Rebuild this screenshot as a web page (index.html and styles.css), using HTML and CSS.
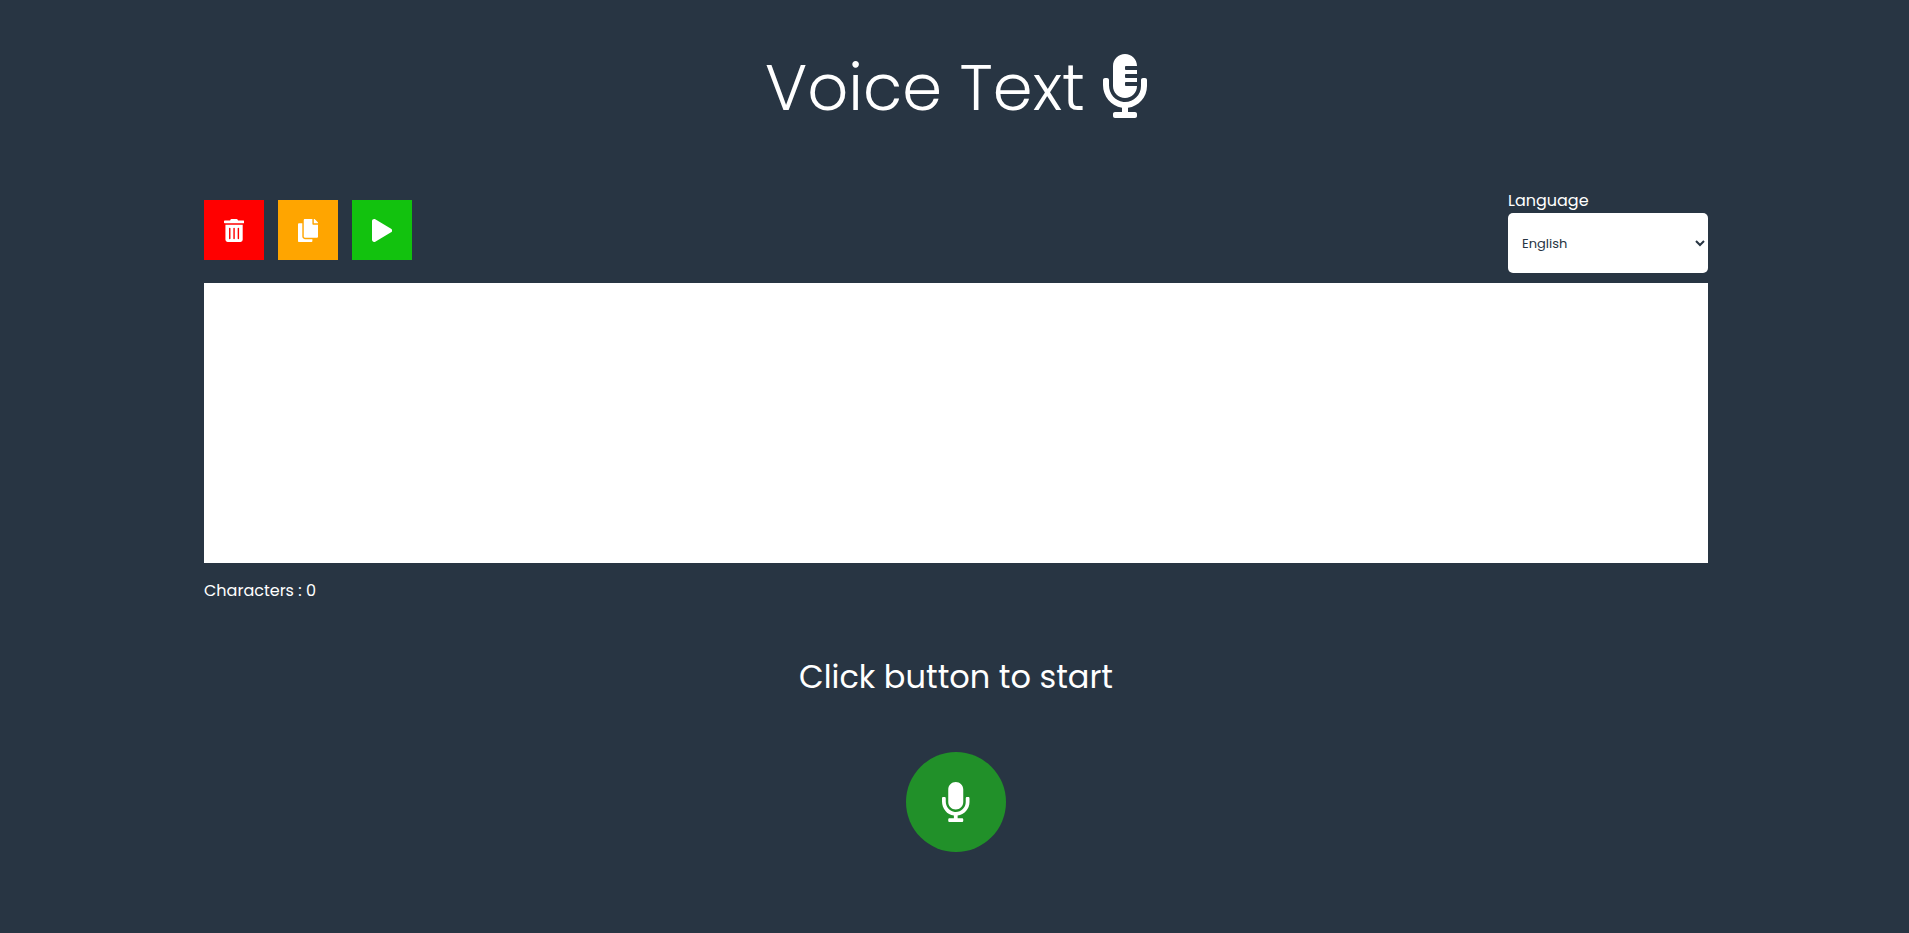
FILE: index.html
```html
<!DOCTYPE html>
<html lang="en">
<head>
<meta charset="utf-8">
<meta name="viewport" content="width=device-width, initial-scale=1">
<title>Voice Text</title>
<link rel="stylesheet" href="styles.css">
</head>
<body>
<main class="page">
  <h1 class="title">
    <span>Voice Text</span>
    <svg class="title-icon" viewBox="0 0 352 512" aria-hidden="true"><path d="M336 192h-16c-8.840 0-16 7.160-16 16v48c0 74.800-64.490 134.820-140.790 127.380C96.710 376.890 48 317.110 48 250.300V208c0-8.840-7.160-16-16-16H16c-8.840 0-16 7.160-16 16v40.160c0 89.640 63.970 169.550 152 181.690V464H96c-8.840 0-16 7.160-16 16v16c0 8.840 7.160 16 16 16h160c8.840 0 16-7.160 16-16v-16c0-8.840-7.160-16-16-16h-56v-33.770C285.710 418.470 352 344.900 352 256v-48c0-8.840-7.160-16-16-16zM176 352c53.020 0 96-42.980 96-96h-85.330c-5.890 0-10.670-3.580-10.670-8v-16c0-4.420 4.780-8 10.670-8H272v-32h-85.330c-5.890 0-10.670-3.580-10.670-8v-16c0-4.420 4.780-8 10.670-8H272v-32h-85.330c-5.890 0-10.670-3.580-10.670-8v-16c0-4.420 4.780-8 10.670-8H272c0-53.020-42.980-96-96-96S80 42.980 80 96v160c0 53.020 42.980 96 96 96z"/></svg>
  </h1>
  <div class="toolbar">
    <div class="actions">
      <button class="action action-clear" type="button" aria-label="Clear"><svg viewBox="0 0 448 512" aria-hidden="true"><path d="M32 464a48 48 0 0 0 48 48h288a48 48 0 0 0 48-48V128H32zm272-256a16 16 0 0 1 32 0v224a16 16 0 0 1-32 0zm-96 0a16 16 0 0 1 32 0v224a16 16 0 0 1-32 0zm-96 0a16 16 0 0 1 32 0v224a16 16 0 0 1-32 0zM432 32H312l-9.400-18.700A24 24 0 0 0 281.100 0H166.800a23.720 23.720 0 0 0-21.400 13.300L136 32H16A16 16 0 0 0 0 48v32a16 16 0 0 0 16 16h416a16 16 0 0 0 16-16V48a16 16 0 0 0-16-16z"/></svg></button>
      <button class="action action-copy" type="button" aria-label="Copy"><svg viewBox="0 0 448 512" aria-hidden="true"><path d="M320 448v40c0 13-11 24-24 24H24c-13 0-24-11-24-24V120c0-13 11-24 24-24h72v296c0 31 25 56 56 56zm0-344V0H152c-13 0-24 11-24 24v368c0 13 11 24 24 24h272c13 0 24-11 24-24V128H344c-13 0-24-11-24-24zm121-31L375 7c-5-5-11-7-17-7h-6v96h96v-6c0-6-3-12-7-17z"/></svg></button>
      <button class="action action-play" type="button" aria-label="Play"><svg viewBox="0 0 448 512" aria-hidden="true"><path d="M424.400 214.700L72.400 6.600C43.800-10.300 0 6.100 0 47.900V464c0 37.500 40.700 60.100 72.400 41.300l352-208c31.400-18.500 31.500-64.100 0-82.600z"/></svg></button>
    </div>
    <div class="language">
      <label for="language">Language</label>
      <select id="language" class="select"><option>English</option></select>
    </div>
  </div>
  <textarea class="text" aria-label="Text"></textarea>
  <p class="count">Characters : 0</p>
  <p class="status">Click button to start</p>
  <button class="record" type="button" aria-label="Start recording"><svg viewBox="0 0 352 512" aria-hidden="true"><path d="M176 352c53.020 0 96-42.980 96-96V96c0-53.020-42.980-96-96-96S80 42.980 80 96v160c0 53.020 42.980 96 96 96zm160-160h-16c-8.840 0-16 7.160-16 16v48c0 74.800-64.490 134.820-140.790 127.380C96.710 376.890 48 317.110 48 250.300V208c0-8.840-7.160-16-16-16H16c-8.840 0-16 7.160-16 16v40.160c0 89.640 63.970 169.550 152 181.690V464H96c-8.840 0-16 7.160-16 16v16c0 8.840 7.160 16 16 16h160c8.840 0 16-7.160 16-16v-16c0-8.840-7.160-16-16-16h-56v-33.770C285.710 418.470 352 344.900 352 256v-48c0-8.840-7.160-16-16-16z"/></svg></button>
</main>
</body>
</html>
```
FILE: styles.css
```css
* {
  box-sizing: border-box;
}

body {
  margin: 0;
  min-height: 100vh;
  background: #283543;
  color: #fff;
  font: 16px/24px Poppins, Inter, sans-serif;
}

svg {
  display: block;
  fill: currentColor;
}

.page {
  display: flex;
  flex-direction: column;
  padding: 36px 201px 0 204px;
}

.title {
  display: flex;
  align-items: center;
  justify-content: center;
  gap: 18px;
  margin: 0 0 52px;
  font-size: 64px;
  font-weight: 300;
  line-height: 100px;
}

.title span {
  padding-top: 4px;
  line-height: 96px;
}

.title-icon {
  height: 64px;
}

.toolbar {
  display: flex;
  align-items: flex-start;
  justify-content: space-between;
  margin-bottom: 10px;
}

.actions {
  display: flex;
  gap: 14px;
  padding-top: 12px;
}

.action {
  display: grid;
  place-items: center;
  width: 60px;
  height: 60px;
  padding: 0;
  border: 0;
  color: #fff;
}

.action svg {
  height: 23px;
}

.action-clear {
  background: #f00;
}

.action-copy {
  background: #ffa500;
}

.action-play {
  background: #12c20e;
}

.language {
  display: flex;
  flex-direction: column;
  width: 200px;
  line-height: 25px;
}

.select {
  height: 60px;
  padding: 0 10px;
  border: 0;
  border-radius: 5px;
  background: #fff;
  color: #283543;
  font: 13px Poppins, Inter, sans-serif;
}

.text {
  display: block;
  width: 100%;
  height: 280px;
  padding: 10px;
  border: 0;
  background: #fff;
  font: inherit;
  resize: none;
}

.count {
  margin: 16px 0 50px;
}

.status {
  margin: 0 0 51px;
  font-size: 32px;
  line-height: 48px;
  text-align: center;
}

.record {
  display: grid;
  place-items: center;
  align-self: center;
  width: 100px;
  height: 100px;
  padding: 0;
  border: 0;
  border-radius: 50%;
  background: #219029;
  color: #fff;
}

.record svg {
  height: 40px;
}
```
